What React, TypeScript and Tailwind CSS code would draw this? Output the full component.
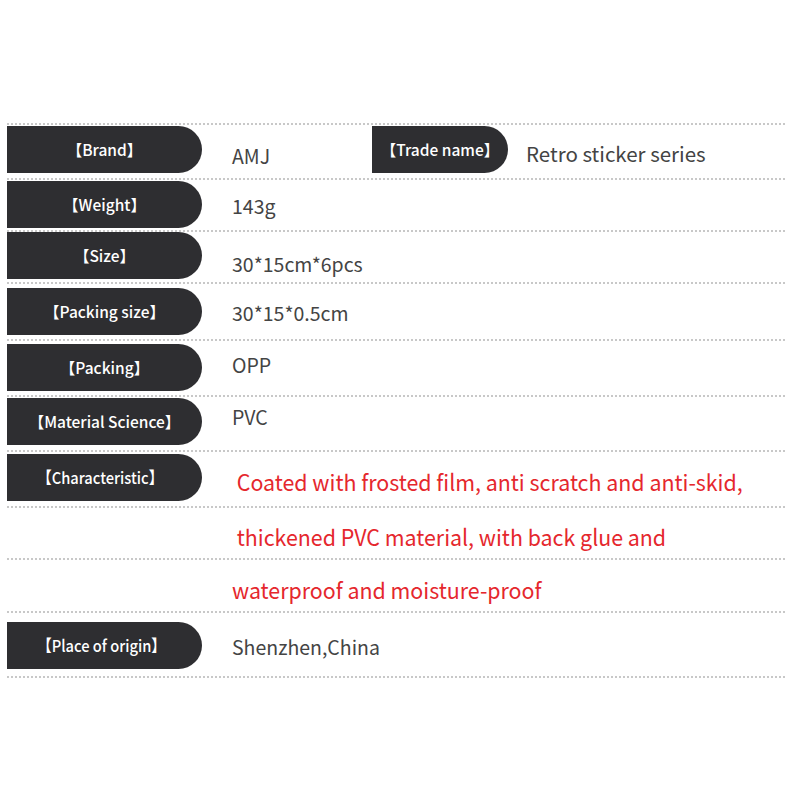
import React from 'react';

const font = { fontFamily: '"Noto Sans CJK SC", "Noto Sans", sans-serif' };

interface Row {
  label?: string;
  value?: string;
  h: string;
  pillTop: string;
  valueTop: string;
  red?: boolean;
  narrow?: boolean;
}

// heights include the 2px dotted rule at the bottom
const rows: Row[] = [
  { label: '【Weight】', value: '143g', h: 'h-[52px]', pillTop: 'mt-[1px]', valueTop: 'mt-[14px]' },
  { label: '【Size】', value: '30*15cm*6pcs', h: 'h-[52px]', pillTop: 'mt-0', valueTop: 'mt-[20px]' },
  { label: '【Packing size】', value: '30*15*0.5cm', h: 'h-[57px]', pillTop: 'mt-[4px]', valueTop: 'mt-[17px]' },
  { label: '【Packing】', value: 'OPP', h: 'h-[56px]', pillTop: 'mt-[3px]', valueTop: 'mt-[12px]' },
  { label: '【Material Science】', value: 'PVC', h: 'h-[55px]', pillTop: 'mt-[1px]', valueTop: 'mt-[8px]' },
  {
    label: '【Characteristic】',
    value: ' Coated with frosted film, anti scratch and anti-skid,',
    h: 'h-[56px]',
    pillTop: 'mt-[2px]',
    valueTop: 'mt-[15px]',
    red: true,
    narrow: true,
  },
  { value: ' thickened PVC material, with back glue and', h: 'h-[52px]', pillTop: '', valueTop: 'mt-[14px]', red: true },
  { value: 'waterproof and moisture-proof', h: 'h-[53px]', pillTop: '', valueTop: 'mt-[15px]', red: true },
  {
    label: '【Place of origin】',
    value: 'Shenzhen,China',
    h: 'h-[65px]',
    pillTop: 'mt-[9px]',
    valueTop: 'mt-[22px]',
    narrow: true,
  },
];

const Pill = ({ text, narrow, className = '' }: { text: string; narrow?: boolean; className?: string }) => (
  <div
    className={`h-[47px] w-[195px] shrink-0 bg-[#2e2e31] rounded-r-[24px] flex items-center text-white font-medium ${
      narrow ? 'justify-start pl-[30px] text-[16.5px]' : 'justify-center text-[15.5px]'
    } ${className}`}
  >
    <span className={narrow ? 'inline-block scale-x-[0.89] origin-left' : ''}>{text}</span>
  </div>
);

export default function App() {
  return (
    <div className="w-[800px] h-[800px] bg-white overflow-hidden" style={font}>
      <div className="mt-[123px] ml-[7px] w-[778px] border-b-2 border-dotted border-[#c8c8c8]" />
      {/* first row with two columns */}
      <div className="ml-[7px] w-[778px] h-[55px] border-b-2 border-dotted border-[#c8c8c8] flex items-start">
        <Pill text="【Brand】" className="mt-[1px]" />
        <div className="mt-[19px] ml-[30px] w-[140px] text-[19.5px] leading-[24px] text-[#444]">AMJ</div>
        <div className="mt-[1px] h-[47px] w-[136px] shrink-0 bg-[#2e2e31] rounded-r-[24px] flex items-center justify-center text-white text-[15.5px] font-medium">
          【Trade name】
        </div>
        <div className="mt-[16px] ml-[18px] text-[20.5px] leading-[24px] text-[#444]">Retro sticker series</div>
      </div>
      {rows.map((r, i) => (
        <div
          key={i}
          className={`ml-[7px] w-[778px] ${r.h} border-b-2 border-dotted border-[#c8c8c8] flex items-start`}
        >
          {r.label ? (
            <Pill text={r.label} narrow={r.narrow} className={r.pillTop} />
          ) : (
            <div className="w-[195px] shrink-0" />
          )}
          <div
            className={`${r.valueTop} ml-[30px] whitespace-pre ${
              r.red ? 'text-[22.5px] leading-[28px] text-[#e5272d]' : 'text-[19.5px] leading-[24px] text-[#444]'
            }`}
          >
            <span className={r.red ? 'inline-block scale-x-[0.95] origin-left' : ''}>{r.value}</span>
          </div>
        </div>
      ))}
    </div>
  );
}
